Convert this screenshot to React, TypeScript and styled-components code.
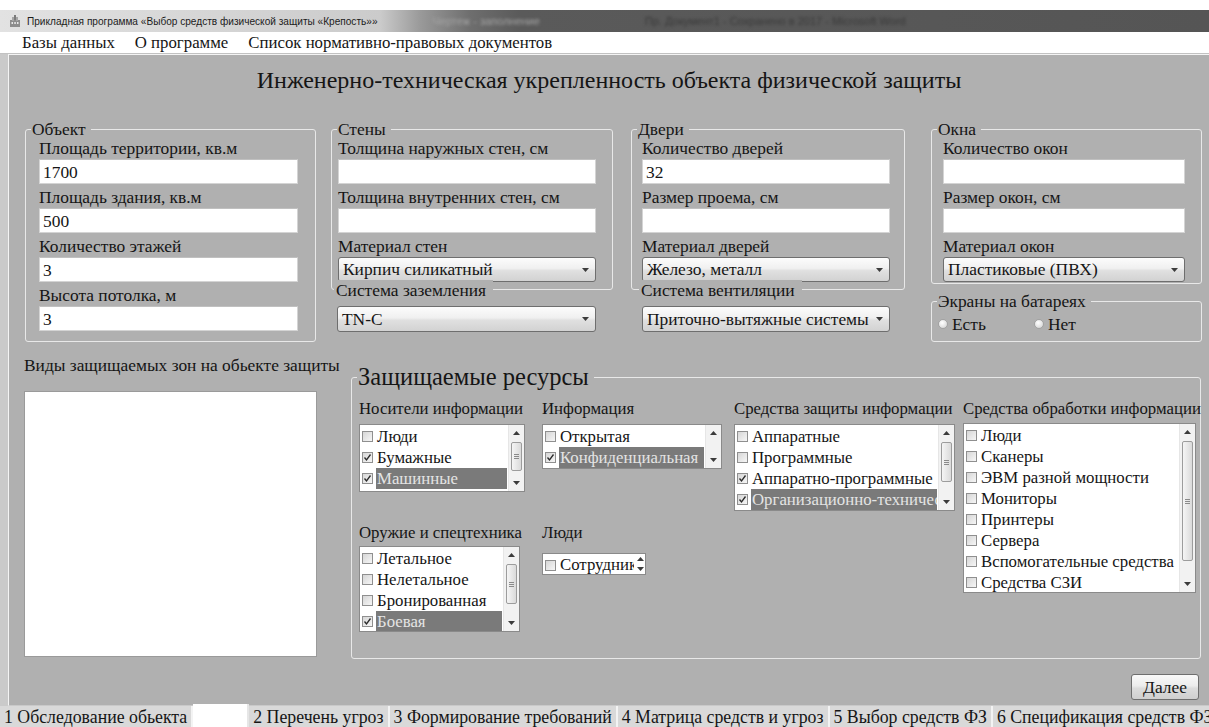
import React from 'react';
import styled, { createGlobalStyle } from 'styled-components';

const SERIF = '"Liberation Serif", "DejaVu Serif", "Times New Roman", serif';

const GlobalStyle = createGlobalStyle`
  html, body {
    margin: 0;
    padding: 0;
    background: #fff;
  }
  body {
    font-family: ${SERIF};
    font-size: 17.4px;
    color: #151515;
  }
`;

const PANEL = '#b0b0b0';

type Item = { text: string; checked?: boolean; selected?: boolean };
type Scroll =
  | { kind: 'thumb'; top: number; size: number }
  | { kind: 'arrows' }
  | { kind: 'spin' };

const Window = styled.div`
  width: 1209px;
  height: 727px;
  overflow: hidden;
  display: flex;
  flex-direction: column;
  background: #fff;
  font-family: ${SERIF};
`;

const TopGap = styled.div`
  height: 10px;
  flex: none;
`;

const TitleBar = styled.div`
  height: 22px;
  flex: none;
  display: flex;
  align-items: center;
  padding-left: 9px;
  background: linear-gradient(
    to right,
    #e2e2e2 0px,
    #cbcbcb 380px,
    #9a9a9a 420px,
    #6e6e6e 470px,
    #5a5a5a 520px,
    #555 100%
  );
  font-family: "Liberation Sans", Arial, sans-serif;
  font-size: 10.1px;
  color: #1c1c1c;
  white-space: nowrap;
`;

const Caption = styled.span`
  margin-left: 6px;
`;

const GhostCaption = styled.span<{ $left: number; $color: string }>`
  margin-left: ${p => p.$left}px;
  color: ${p => p.$color};
  filter: blur(1.4px);
  font-size: 11px;
`;

const MenuBar = styled.div`
  height: 21px;
  flex: none;
  display: flex;
  align-items: center;
  padding-left: 12px;
  border-bottom: 1px solid #c2c2c2;
`;

const MenuItem = styled.span`
  padding: 0 10px;
  font-size: 16.8px;
  line-height: 20px;
  white-space: nowrap;
`;

const Workspace = styled.div`
  flex: 1;
  min-height: 0;
  display: flex;
  padding-left: 8px;
  background: #cacaca;
`;

const Panel = styled.div`
  flex: 1;
  min-width: 0;
  display: flex;
  flex-direction: column;
  background: ${PANEL};
  border-top: 1px solid #f4f4f4;
  border-left: 1px solid #f4f4f4;
  border-bottom: 1px solid #c9c9c9;
`;

const Heading = styled.h1`
  margin: 0;
  padding-top: 11px;
  font-size: 24px;
  font-weight: normal;
  line-height: 28px;
  text-align: center;
`;

const TopRow = styled.div`
  display: flex;
  align-items: flex-start;
  margin-top: 27px;
  padding-left: 16px;
`;

const Column = styled.div<{ $w: number; $ml?: number }>`
  display: flex;
  flex-direction: column;
  width: ${p => p.$w}px;
  margin-left: ${p => p.$ml ?? 0}px;
  flex: none;
`;

const Group = styled.fieldset<{ $pl: number; $pr: number; $pb: number; $mt?: number }>`
  margin: ${p => p.$mt ?? 0}px 0 0;
  padding: 0 ${p => p.$pr}px ${p => p.$pb}px ${p => p.$pl}px;
  border: 1px solid #e8e8e8;
  border-radius: 3px;
  min-width: 0;
  & > legend {
    margin-left: ${p => 5 - p.$pl}px;
  }
`;

const GroupTitle = styled.legend<{ $big?: boolean }>`
  padding: 0 5px 0 1px;
  font-size: ${p => (p.$big ? 24.5 : 17.4)}px;
  line-height: ${p => (p.$big ? 28 : 16)}px;
  white-space: nowrap;
`;

const Stack = styled.div`
  display: flex;
  flex-direction: column;
  margin-top: -2px;
`;

const FieldLabel = styled.div`
  height: 24px;
  box-sizing: border-box;
  padding-top: 3px;
  line-height: 21px;
  white-space: nowrap;
`;

const TextBox = styled.input`
  display: block;
  width: 100%;
  height: 25px;
  box-sizing: border-box;
  margin: 0;
  padding: 1px 3px 0;
  border: 1px solid #d4d4d4;
  border-top-color: #c0c0c0;
  background: #fff;
  font-family: ${SERIF};
  font-size: 17.4px;
  color: #151515;
  outline: none;
`;

const ComboBox = styled.div<{ $w?: number; $ml?: number; $mt?: number }>`
  display: flex;
  align-items: center;
  justify-content: space-between;
  width: ${p => (p.$w ? `${p.$w}px` : '100%')};
  height: ${p => (p.$mt ? 26 : 25)}px;
  box-sizing: border-box;
  margin: ${p => p.$mt ?? 0}px 0 0 ${p => p.$ml ?? 0}px;
  padding: 0 6px 0 4px;
  border: 1px solid #6e6e6e;
  border-radius: 3px;
  background: linear-gradient(#fcfcfc, #f0f0f0 45%, #e0e0e0 55%, #d2d2d2);
  white-space: nowrap;
`;

const OverLabel = styled.div<{ $ml: number }>`
  position: relative;
  align-self: flex-start;
  margin: -10px 0 0 ${p => p.$ml}px;
  padding: 0 7px 0 2px;
  background: ${PANEL};
  line-height: 20px;
  white-space: nowrap;
`;

const RadioRow = styled.div`
  display: flex;
  align-items: center;
  gap: 48px;
  height: 22px;
  padding-top: 6px;
`;

const RadioItem = styled.label`
  display: flex;
  align-items: center;
  gap: 4px;
  line-height: 22px;
`;

const RadioDot = styled.span`
  width: 10px;
  height: 10px;
  box-sizing: border-box;
  border-radius: 50%;
  border: 1px solid #a2a2a2;
  background: radial-gradient(circle at 40% 35%, #fff, #e2e2e2 60%, #c8c8c8);
`;

const MidRow = styled.div`
  display: flex;
  align-items: flex-start;
  margin-top: 13px;
  padding-left: 15px;
`;

const ZonePane = styled.div`
  width: 327px;
  flex: none;
  display: flex;
  flex-direction: column;
`;

const PaneLabel = styled.div`
  line-height: 20px;
  white-space: nowrap;
`;

const ZoneList = styled.div`
  width: 293px;
  height: 266px;
  margin-top: 16px;
  box-sizing: border-box;
  border: 1px solid #9a9a9a;
  background: #fff;
`;

const ResGrid = styled.div`
  display: grid;
  grid-template-columns: 183px 192px 229px 1fr;
  grid-template-rows: 124px auto;
  padding-top: 8px;
  font-size: 16.8px;
`;

const ResCell = styled.div`
  display: flex;
  flex-direction: column;
  align-items: flex-start;
`;

const CellLabel = styled.div<{ $gap: number }>`
  line-height: 20px;
  margin-bottom: ${p => p.$gap}px;
  white-space: nowrap;
`;

const ListBox = styled.div<{ $w: number; $h: number }>`
  display: flex;
  flex: none;
  width: ${p => p.$w}px;
  height: ${p => p.$h}px;
  box-sizing: border-box;
  border: 1px solid #8a8a8a;
  background: #fff;
  overflow: hidden;
`;

const ListItems = styled.div`
  flex: 1;
  min-width: 0;
  padding-top: 1px;
`;

const ListRow = styled.div<{ $h: number }>`
  display: flex;
  align-items: center;
  height: ${p => p.$h}px;
  padding-left: 2px;
  white-space: nowrap;
`;

const CheckBox = styled.span`
  width: 11px;
  height: 11px;
  flex: none;
  box-sizing: border-box;
  border: 1px solid #8f8f8f;
  background: linear-gradient(135deg, #d6d6d6, #f6f6f6);
  display: flex;
  align-items: center;
  justify-content: center;
`;

const ItemText = styled.span<{ $selected?: boolean }>`
  flex: 1;
  min-width: 0;
  align-self: stretch;
  display: flex;
  align-items: center;
  margin: 0 1px 0 3px;
  padding-left: 1px;
  overflow: hidden;
  background: ${p => (p.$selected ? '#7a7a7a' : 'transparent')};
  color: ${p => (p.$selected ? '#e4e4e4' : '#151515')};
`;

const ScrollBar = styled.div<{ $w: number; $plain?: boolean }>`
  width: ${p => p.$w}px;
  flex: none;
  display: flex;
  flex-direction: column;
  align-items: center;
  background: ${p => (p.$plain ? '#fff' : '#f2f2f2')};
  border-left: ${p => (p.$plain ? 'none' : '1px solid #e6e6e6')};
`;

const ScrollBtn = styled.div<{ $h: number }>`
  height: ${p => p.$h}px;
  flex: none;
  display: flex;
  align-items: center;
  justify-content: center;
`;

const Track = styled.div`
  flex: 1;
  display: flex;
  flex-direction: column;
  align-items: center;
`;

const Thumb = styled.div<{ $top: number; $size: number }>`
  width: 11px;
  height: ${p => p.$size}px;
  margin-top: ${p => p.$top}px;
  box-sizing: border-box;
  border: 1px solid #9c9c9c;
  border-radius: 2px;
  background: linear-gradient(to right, #f5f5f5, #dadada);
  display: flex;
  align-items: center;
  justify-content: center;
`;

const Footer = styled.div`
  margin-top: auto;
  display: flex;
  justify-content: flex-end;
  padding: 0 10px 5px 0;
`;

const NextButton = styled.button`
  width: 68px;
  height: 26px;
  margin: 0;
  padding: 0;
  border: 1px solid #6e6e6e;
  border-radius: 3px;
  background: linear-gradient(#f9f9f9, #ececec 45%, #dcdcdc 55%, #cfcfcf);
  font-family: ${SERIF};
  font-size: 17.4px;
  color: #151515;
`;

const TabStrip = styled.div`
  height: 21px;
  flex: none;
  display: flex;
  align-items: stretch;
  background: #d9d9d9;
  font-size: 17.8px;
`;

const Tab = styled.div<{ $blank?: boolean }>`
  display: flex;
  align-items: center;
  flex: none;
  padding: 0 4px;
  white-space: nowrap;
  line-height: 20px;
  border-right: 2px solid #f3f3f3;
  ${p =>
    p.$blank &&
    `
    width: 56px;
    box-sizing: border-box;
    margin-top: -2px;
    background: #fff;
    border-right: 2px solid #e6e6e6;
  `}
`;

const Arrow = ({ up }: { up?: boolean }) => (
  <svg width="7" height="4" viewBox="0 0 7 4">
    <path d={up ? 'M0 4 L3.5 0 L7 4 Z' : 'M0 0 L3.5 4 L7 0 Z'} fill="#3c3c3c" />
  </svg>
);

const Grip = () => (
  <svg width="5" height="5" viewBox="0 0 5 5">
    <path d="M0 0.5 H5 M0 2.5 H5 M0 4.5 H5" stroke="#8a8a8a" strokeWidth="1" />
  </svg>
);

const Tick = () => (
  <svg width="9" height="9" viewBox="0 0 9 9">
    <path d="M1.5 4.5 L3.5 7 L7.5 1.5" fill="none" stroke="#2a2a2a" strokeWidth="1.3" />
  </svg>
);

// tiny fortress glyph used as the window icon
const AppIcon = () => (
  <svg width="12" height="12" viewBox="0 0 12 12">
    <rect x="1" y="5" width="10" height="7" fill="#8d8d8d" />
    <rect x="3" y="2" width="2" height="4" fill="#a5a5a5" />
    <rect x="7" y="2" width="2" height="4" fill="#a5a5a5" />
    <rect x="5" y="0" width="2" height="5" fill="#7a7a7a" />
    <rect x="2.5" y="7" width="1.5" height="2" fill="#e8e8e8" />
    <rect x="5.3" y="7" width="1.5" height="2" fill="#e8e8e8" />
    <rect x="8" y="7" width="1.5" height="2" fill="#e8e8e8" />
  </svg>
);

const Field = ({ label, value = '' }: { label: string; value?: string }) => (
  <>
    <FieldLabel>{label}</FieldLabel>
    <TextBox readOnly value={value} />
  </>
);

const Combo = ({ value, w, ml, mt }: { value: string; w?: number; ml?: number; mt?: number }) => (
  <ComboBox $w={w} $ml={ml} $mt={mt}>
    <span>{value}</span>
    <Arrow />
  </ComboBox>
);

const CheckList = ({
  items,
  w,
  h,
  rowH = 21,
  scroll,
}: {
  items: Item[];
  w: number;
  h: number;
  rowH?: number;
  scroll: Scroll;
}) => (
  <ListBox $w={w} $h={h}>
    <ListItems>
      {items.map(it => (
        <ListRow key={it.text} $h={rowH}>
          <CheckBox>{it.checked && <Tick />}</CheckBox>
          <ItemText $selected={it.selected}>{it.text}</ItemText>
        </ListRow>
      ))}
    </ListItems>
    {scroll.kind === 'spin' ? (
      <ScrollBar $w={10} $plain>
        <ScrollBtn $h={10}>
          <Arrow up />
        </ScrollBtn>
        <ScrollBtn $h={10}>
          <Arrow />
        </ScrollBtn>
      </ScrollBar>
    ) : (
      <ScrollBar $w={15}>
        <ScrollBtn $h={16}>
          <Arrow up />
        </ScrollBtn>
        <Track>
          {scroll.kind === 'thumb' && (
            <Thumb $top={scroll.top} $size={scroll.size}>
              <Grip />
            </Thumb>
          )}
        </Track>
        <ScrollBtn $h={16}>
          <Arrow />
        </ScrollBtn>
      </ScrollBar>
    )}
  </ListBox>
);

const carriers: Item[] = [
  { text: 'Люди' },
  { text: 'Бумажные', checked: true },
  { text: 'Машинные', checked: true, selected: true },
];

const info: Item[] = [
  { text: 'Открытая' },
  { text: 'Конфиденциальная', checked: true, selected: true },
];

const protection: Item[] = [
  { text: 'Аппаратные' },
  { text: 'Программные' },
  { text: 'Аппаратно-программные', checked: true },
  { text: 'Организационно-технические', checked: true, selected: true },
];

const processing: Item[] = [
  { text: 'Люди' },
  { text: 'Сканеры' },
  { text: 'ЭВМ разной мощности' },
  { text: 'Мониторы' },
  { text: 'Принтеры' },
  { text: 'Сервера' },
  { text: 'Вспомогательные средства' },
  { text: 'Средства СЗИ' },
];

const weapons: Item[] = [
  { text: 'Летальное' },
  { text: 'Нелетальное' },
  { text: 'Бронированная' },
  { text: 'Боевая', checked: true, selected: true },
];

const people: Item[] = [{ text: 'Сотрудник' }];

const tabs = [
  '1 Обследование обьекта',
  '',
  '2 Перечень угроз',
  '3 Формирование требований',
  '4 Матрица средств и угроз',
  '5 Выбор средств ФЗ',
  '6 Спецификация средств ФЗ',
];

export default function App() {
  return (
    <>
      <GlobalStyle />
      <Window>
        <TopGap />
        <TitleBar>
          <AppIcon />
          <Caption>Прикладная программа «Выбор средств физической защиты «Крепость»»</Caption>
          <GhostCaption $left={55} $color="#a4a4a4">
            Чертеж - заполнение
          </GhostCaption>
          <GhostCaption $left={105} $color="#383838">
            Пр. Документ1 - Сохранено в 2017 - Microsoft Word
          </GhostCaption>
        </TitleBar>
        <MenuBar>
          <MenuItem>Базы данных</MenuItem>
          <MenuItem>О программе</MenuItem>
          <MenuItem>Список нормативно-правовых документов</MenuItem>
        </MenuBar>

        <Workspace>
          <Panel>
            <Heading>Инженерно-техническая укрепленность объекта физической защиты</Heading>

            <TopRow>
              <Column $w={291}>
                <Group $pl={13} $pr={17} $pb={10}>
                  <GroupTitle>Объект</GroupTitle>
                  <Stack>
                    <Field label="Площадь территории, кв.м" value="1700" />
                    <Field label="Площадь здания, кв.м" value="500" />
                    <Field label="Количество этажей" value="3" />
                    <Field label="Высота потолка, м" value="3" />
                  </Stack>
                </Group>
              </Column>

              <Column $w={282} $ml={15}>
                <Group $pl={6} $pr={16} $pb={7}>
                  <GroupTitle>Стены</GroupTitle>
                  <Stack>
                    <Field label="Толщина наружных стен, см" />
                    <Field label="Толщина внутренних стен, см" />
                    <FieldLabel>Материал стен</FieldLabel>
                    <Combo value="Кирпич силикатный" />
                  </Stack>
                </Group>
                <OverLabel $ml={3}>Система заземления</OverLabel>
                <Combo value="TN-C" w={259} ml={6} mt={6} />
              </Column>

              <Column $w={274} $ml={18}>
                <Group $pl={10} $pr={14} $pb={7}>
                  <GroupTitle>Двери</GroupTitle>
                  <Stack>
                    <Field label="Количество дверей" value="32" />
                    <Field label="Размер проема, см" />
                    <FieldLabel>Материал дверей</FieldLabel>
                    <Combo value="Железо, металл" />
                  </Stack>
                </Group>
                <OverLabel $ml={8}>Система вентиляции</OverLabel>
                <Combo value="Приточно-вытяжные системы" w={248} ml={11} mt={6} />
              </Column>

              <Column $w={271} $ml={26}>
                <Group $pl={11} $pr={16} $pb={1}>
                  <GroupTitle>Окна</GroupTitle>
                  <Stack>
                    <Field label="Количество окон" />
                    <Field label="Размер окон, см" />
                    <FieldLabel>Материал окон</FieldLabel>
                    <Combo value="Пластиковые (ПВХ)" />
                  </Stack>
                </Group>
                <Group $pl={6} $pr={10} $pb={6} $mt={9}>
                  <GroupTitle>Экраны на батареях</GroupTitle>
                  <Stack>
                    <RadioRow>
                      <RadioItem>
                        <RadioDot />
                        Есть
                      </RadioItem>
                      <RadioItem>
                        <RadioDot />
                        Нет
                      </RadioItem>
                    </RadioRow>
                  </Stack>
                </Group>
              </Column>
            </TopRow>

            <MidRow>
              <ZonePane>
                <PaneLabel>Виды защищаемых зон на обьекте защиты</PaneLabel>
                <ZoneList />
              </ZonePane>

              <Column $w={850}>
                <Group $pl={7} $pr={4} $pb={26} $mt={8}>
                  <GroupTitle $big>Защищаемые ресурсы</GroupTitle>
                  <ResGrid>
                    <ResCell>
                      <CellLabel $gap={5}>Носители информации</CellLabel>
                      <CheckList items={carriers} w={166} h={68} scroll={{ kind: 'thumb', top: 1, size: 29 }} />
                    </ResCell>
                    <ResCell>
                      <CellLabel $gap={5}>Информация</CellLabel>
                      <CheckList items={info} w={180} h={45} scroll={{ kind: 'arrows' }} />
                    </ResCell>
                    <ResCell>
                      <CellLabel $gap={5}>Средства защиты информации</CellLabel>
                      <CheckList items={protection} w={221} h={87} scroll={{ kind: 'thumb', top: 1, size: 40 }} />
                    </ResCell>
                    <ResCell>
                      <CellLabel $gap={4}>Средства обработки информации</CellLabel>
                      <CheckList items={processing} w={233} h={170} scroll={{ kind: 'thumb', top: 1, size: 120 }} />
                    </ResCell>
                    <ResCell>
                      <CellLabel $gap={3}>Оружие и спецтехника</CellLabel>
                      <CheckList items={weapons} w={161} h={86} scroll={{ kind: 'thumb', top: 1, size: 40 }} />
                    </ResCell>
                    <ResCell>
                      <CellLabel $gap={10}>Люди</CellLabel>
                      <CheckList items={people} w={104} h={22} rowH={20} scroll={{ kind: 'spin' }} />
                    </ResCell>
                  </ResGrid>
                </Group>
              </Column>
            </MidRow>

            <Footer>
              <NextButton>Далее</NextButton>
            </Footer>
          </Panel>
        </Workspace>

        <TabStrip>
          {tabs.map((t, i) => (
            <Tab key={i} $blank={t === ''}>
              {t}
            </Tab>
          ))}
        </TabStrip>
      </Window>
    </>
  );
}
